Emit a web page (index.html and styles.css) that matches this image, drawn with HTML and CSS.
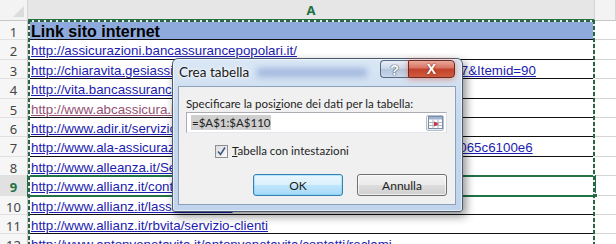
FILE: index.html
```html
<!DOCTYPE html>
<html lang="it">
<head>
<meta charset="utf-8">
<title>Crea tabella</title>
<link rel="stylesheet" href="styles.css">
</head>
<body>
<div class="screen">
  <div class="sheet">
    <div class="corner"><span class="tri"></span></div>
    <div class="colhead active">A</div>
    <div class="colhead"></div>

    <div class="rh">1</div><div class="cell head">Link sito internet</div><div class="cb"></div>
    <div class="rh">2</div><div class="cell"><a>http://assicurazioni.bancassurancepopolari.it/</a></div><div class="cb"></div>
    <div class="rh">3</div><div class="cell"><a>http://chiaravita.gesiassicurazioni.it/index.php?option=com_content&amp;id=67&amp;Itemid=90</a></div><div class="cb"></div>
    <div class="rh">4</div><div class="cell"><a>http://vita.bancassurancepopolari.it/assistenza/</a></div><div class="cb"></div>
    <div class="rh">5</div><div class="cell"><a class="visited">http://www.abcassicura.it/contatti</a></div><div class="cb"></div>
    <div class="rh">6</div><div class="cell"><a>http://www.adir.it/servizio-clienti</a></div><div class="cb"></div>
    <div class="rh">7</div><div class="cell"><a>http://www.ala-assicurazioni.it/index.php?page=contatti/&amp;id=5abcde1402065c6100e6</a></div><div class="cb"></div>
    <div class="rh">8</div><div class="cell"><a>http://www.alleanza.it/Servizi/Contatti</a></div><div class="cb"></div>
    <div class="rh sel">9</div><div class="cell active"><a>http://www.allianz.it/contatti</a><span class="handle"></span></div><div class="cb"></div>
    <div class="rh">10</div><div class="cell"><a>http://www.allianz.it/lassicurazione</a></div><div class="cb"></div>
    <div class="rh">11</div><div class="cell"><a>http://www.allianz.it/rbvita/servizio-clienti</a></div><div class="cb"></div>
    <div class="rh">12</div><div class="cell"><a>http://www.antonvenetavita.it/antonvenetavita/contatti/reclami</a></div><div class="cb"></div>
  </div>

  <div class="ants"></div>

  <div class="dialog">
    <div class="titlebar">
      <span class="title">Crea tabella</span>
      <span class="glass"></span>
      <div class="capbtns">
        <span class="help">?</span>
        <span class="close">X</span>
      </div>
    </div>
    <div class="panel">
      <div class="label">Specificare la posi<u>z</u>ione dei dati per la tabella:</div>
      <div class="input">
        <span class="seltext">=$A$1:$A$110</span>
        <span class="rbtn">
          <svg width="15" height="13" viewBox="0 0 15 13">
            <rect x="0.5" y="0.5" width="14" height="12" fill="#fff" stroke="#7b8ea8"/>
            <rect x="1" y="1" width="13" height="2.5" fill="#9fb4d0"/>
            <path d="M1 6.5h13M1 9.5h13M5 3.5v9M10 3.5v9" stroke="#aab6c6" stroke-width="1"/>
            <path d="M6 5.5l5 2.5-5 2.5z" fill="#d2333a"/>
          </svg>
        </span>
      </div>
      <div class="check">
        <span class="box">
          <svg width="11" height="11" viewBox="0 0 11 11"><path d="M2 5.5l2.5 3L9 1.5" fill="none" stroke="#3d5a80" stroke-width="1.6"/></svg>
        </span>
        <span><u>T</u>abella con intestazioni</span>
      </div>
      <div class="buttons">
        <button class="btn ok">OK</button>
        <button class="btn">Annulla</button>
      </div>
    </div>
  </div>
</div>
</body>
</html>
```
FILE: styles.css
```css
* { box-sizing: border-box; }
html, body { margin: 0; padding: 0; background: #fff; }
body { width: 616px; height: 244px; overflow: hidden; }

.screen { position: relative; width: 616px; height: 244px; overflow: hidden; }

.sheet {
  display: grid;
  grid-template-columns: 28px 567px 21px;
  grid-template-rows: 21px repeat(12, 19.4px);
  font-family: "Liberation Sans", Arial, sans-serif;
}

.corner {
  background: #f3f3f3;
  border-right: 1px solid #d4d4d4;
  border-bottom: 1px solid #c6c6c6;
  position: relative;
}
.corner .tri {
  position: absolute; right: 3px; bottom: 3px;
  width: 0; height: 0;
  border-left: 11px solid transparent;
  border-bottom: 11px solid #dcdcdc;
}

.colhead {
  background: #f3f3f3;
  border-bottom: 1px solid #c6c6c6;
  border-right: 1px solid #d4d4d4;
  font-family: "Noto Sans", sans-serif;
  font-size: 13px;
  color: #444;
  text-align: center;
  line-height: 20px;
}
.colhead.active {
  background: #e6e6e6;
  color: #217346;
  font-weight: bold;
  border-bottom: 2px solid #217346;
}

.rh {
  background: #f6f6f6;
  border-right: 1px solid #c6c6c6;
  border-bottom: 1px solid #e1e1e1;
  font-family: "Noto Sans", sans-serif;
  font-size: 13px;
  color: #444;
  text-align: center;
  line-height: 19px;
  padding-top: 2px;
}
.rh.sel {
  background: #e1e1e1;
  color: #217346;
  font-weight: bold;
}

.cell {
  border-bottom: 1px solid #111;
  padding-left: 3px;
  padding-top: 2px;
  white-space: nowrap;
  overflow: visible;
  font-size: 13.33px;
  line-height: 17px;
  position: relative;
}
.cell.head {
  background: #8ea9db;
  font-weight: bold;
  font-size: 16px;
  color: #000;
  line-height: 19px;
  padding-top: 1px;
}
.cell a {
  color: #1c1cb0;
  text-decoration: underline;
}
.cell a.visited { color: #954f72; }

.cell.active {
  outline: 2px solid #217346;
  outline-offset: -1px;
}
.handle {
  position: absolute; right: -3px; bottom: -3px;
  width: 5px; height: 5px;
  background: #217346; border: 1px solid #fff;
}

.cb {
  border-bottom: 1px solid #d4d4d4;
}

/* copy marquee (marching ants) */
.ants {
  position: absolute;
  left: 28px; top: 20px;
  width: 567px; height: 240px;
  pointer-events: none;
  background:
    repeating-linear-gradient(90deg, #2a6445 0 4px, #e8efe9 4px 6px) left top / 100% 2px no-repeat,
    repeating-linear-gradient(180deg, #2a6445 0 4px, #e8efe9 4px 6px) left top / 2px 100% no-repeat,
    repeating-linear-gradient(180deg, #2a6445 0 4px, #e8efe9 4px 6px) right top / 2px 100% no-repeat;
}

/* dialog */
.dialog {
  position: absolute;
  left: 172px; top: 58px;
  width: 291px; height: 154px;
  border: 1px solid #4b5a6e;
  border-radius: 6px 6px 3px 3px;
  background: linear-gradient(180deg, #dae7f5 0%, #c6d8ed 40%, #c0d4eb 100%);
  box-shadow: 0 0 0 1px rgba(255,255,255,.55) inset, 3px 4px 10px rgba(0,0,0,.45);
  padding: 0 6px 6px 5px;
  display: flex;
  flex-direction: column;
  font-family: Lato, "Noto Sans", sans-serif;
  font-size: 11.5px;
  color: #1e1e1e;
}

.titlebar {
  height: 27px;
  display: flex;
  align-items: flex-start;
  position: relative;
}
.title {
  flex: none;
  white-space: nowrap;
  padding-left: 1px;
  margin-top: 5px;
  font-size: 13.5px;
  color: #1a1a1a;
  text-shadow: 0 0 6px #fff, 0 0 3px #fff;
  position: relative;
  z-index: 1;
}
.glass {
  flex: none;
  width: 110px;
  height: 9px;
  margin-left: 8px;
  margin-top: 9px;
  background: #8ea6d6;
  filter: blur(3px);
  opacity: .7;
}
.capbtns {
  margin-left: auto;
  margin-top: 1px;
  margin-right: 1px;
  display: flex;
}
.capbtns span {
  height: 18px;
  display: flex;
  align-items: center;
  justify-content: center;
  font-family: "Liberation Sans", sans-serif;
  font-weight: bold;
  border: 1px solid #5a6a80;
}
.help {
  width: 28px;
  border-radius: 4px 0 0 4px;
  border-right: none !important;
  background: linear-gradient(180deg, #e8eef7 0%, #c9d6e8 50%, #b3c5dd 51%, #c9d8ec 100%);
  color: #f7f9fc;
  font-size: 15px;
  text-shadow: 0 0 1px #333, 0 0 1px #333;
}
.close {
  width: 47px;
  border-radius: 0 4px 4px 0;
  background: linear-gradient(180deg, #e9a99b 0%, #d7715f 45%, #c2402c 50%, #cf5a3c 100%);
  color: #fff;
  font-size: 14px;
  border-color: #6d2a22 !important;
  box-shadow: 0 1px 6px rgba(230, 90, 60, .6);
  text-shadow: 0 0 2px #6d1a10;
}

.panel {
  flex: 1;
  background: #f0f0f0;
  border: 1px solid #8aa0bd;
  padding: 6px 8px 0 7px;
  display: flex;
  flex-direction: column;
}
.label {
  white-space: nowrap;
  line-height: 17px;
  margin-top: 2px;
}
.input {
  margin-top: 0;
  height: 21px;
  background: #fff;
  border: 1px solid #abadb3;
  border-right-color: #dbdfe6;
  border-bottom-color: #e3e9ef;
  display: flex;
  align-items: center;
  padding-left: 4px;
  padding-right: 2px;
}
.seltext {
  background: #cfcfcf;
  color: #222;
  line-height: 15px;
  padding: 0 1px;
}
.rbtn {
  margin-left: auto;
  width: 18px; height: 16px;
  border: 1px solid #b5bfcc;
  border-radius: 2px;
  background: linear-gradient(#fdfdfd, #e4e8ee);
  display: flex; align-items: center; justify-content: center;
}
.check {
  margin-top: 11px;
  margin-left: 29px;
  display: flex;
  align-items: center;
  gap: 4px;
  line-height: 14px;
}
.box {
  width: 13px; height: 13px;
  border: 1px solid #8e8f8f;
  background: linear-gradient(135deg, #dcdcdc, #fbfbfb);
  display: flex; align-items: center; justify-content: center;
}
.buttons {
  margin-top: 16px;
  display: flex;
  justify-content: flex-end;
  gap: 14px;
}
.btn {
  width: 90px; height: 22px;
  font-family: Lato, "Noto Sans", sans-serif;
  font-size: 12px;
  color: #1e1e1e;
  border: 1px solid #707070;
  border-radius: 3px;
  background: linear-gradient(180deg, #f2f2f2 0%, #ebebeb 50%, #dddddd 51%, #cfcfcf 100%);
  box-shadow: inset 0 0 0 1px rgba(255,255,255,.7);
  padding: 0;
}
.btn.ok {
  border-color: #3c7fb1;
  background: linear-gradient(180deg, #eaf6fd 0%, #d9f0fc 50%, #bee6fd 51%, #a7d9f5 100%);
  box-shadow: inset 0 0 0 1px #48d0fd55;
}
```
